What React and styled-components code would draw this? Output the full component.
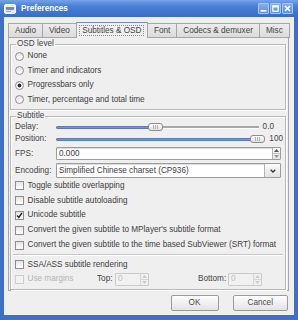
import React from 'react'
import styled, { createGlobalStyle } from 'styled-components'

const GlobalStyle = createGlobalStyle`
  html, body {
    margin: 0;
    padding: 0;
    background: #fff;
  }
  body {
    font-family: "Liberation Sans", Arial, sans-serif;
    font-size: 8.2px;
    line-height: 10px;
    color: #3c3c3c;
  }
`

const Window = styled.div`
  width: 298px;
  height: 320px;
  display: flex;
  flex-direction: column;
  background: #3d70c6;
`

const TitleBar = styled.div`
  height: 17px;
  flex: none;
  display: flex;
  align-items: center;
  padding: 0 5px 0 4px;
  background: linear-gradient(#76a3ea, #4a80d8 35%, #3a6dc6);
`

const TitleText = styled.span`
  flex: 1;
  margin-left: 5px;
  font-weight: bold;
  color: #fff;
`

const TitleButtons = styled.div`
  display: flex;
  gap: 1px;
`

const TitleButton = styled.div`
  width: 11px;
  height: 11px;
  box-sizing: border-box;
  border: 1px solid #a9c4ee;
  border-radius: 1px;
  background: linear-gradient(#86aee9, #5f8fdb);
  display: flex;
  align-items: center;
  justify-content: center;
`

const Frame = styled.div`
  flex: 1;
  display: flex;
  padding: 0 4px 5px 4px;
`

const Client = styled.div`
  flex: 1;
  display: flex;
  flex-direction: column;
  background: #efefef;
  padding: 5px 5px 3px 4px;
`

const TabBar = styled.div`
  display: flex;
  align-items: flex-end;
  height: 16px;
`

const Tab = styled.div`
  position: ${p => (p.active ? 'relative' : 'static')};
  z-index: ${p => (p.active ? 1 : 'auto')};
  flex: none;
  white-space: nowrap;
  height: ${p => (p.active ? 16 : 15)}px;
  box-sizing: border-box;
  padding: 0 ${p => (p.active ? 2.5 : 6)}px;
  margin-right: -1px;
  border: 1px solid #a6a6a6;
  border-top-color: ${p => (p.active ? '#7d8ca6' : '#a6a6a6')};
  border-bottom: none;
  border-radius: 1px 1px 0 0;
  background: ${p => (p.active ? '#efefef' : 'linear-gradient(#ececec, #dadada)')};
  display: flex;
  align-items: center;
  justify-content: center;
  color: #444;
`

const FocusLabel = styled.span`
  border: 1px dotted #8a8a8a;
  padding: 0 2px;
  line-height: 9px;
`

const Panel = styled.div`
  margin-top: -1px;
  height: 254px;
  box-sizing: border-box;
  border: 1px solid #a6a6a6;
  background: #efefef;
  padding: 1px 2px 0 1px;
  display: flex;
  flex-direction: column;
`

const Group = styled.fieldset`
  margin: ${p => p.gap || 0}px 0 0 0;
  padding: 0 2px ${p => p.bottom || 2}px 4px;
  border: 1px solid #b9b9b9;
  box-shadow: inset 1px 1px 0 #fff, 1px 1px 0 #fff;
  min-width: 0;
`

const Legend = styled.legend`
  padding: 0 1px;
  margin-left: 1px;
  line-height: 10px;
  color: #444;
`

const OptionRow = styled.label`
  height: ${p => p.h || 14.5}px;
  display: flex;
  align-items: center;
  gap: 3.5px;
  color: ${p => (p.disabled ? '#b4b4b4' : '#404040')};
  white-space: nowrap;
`

const RadioDot = styled.span`
  width: 9px;
  height: 9px;
  box-sizing: border-box;
  border: 1px solid #8e8e8e;
  border-radius: 50%;
  background: ${p =>
    p.checked
      ? 'radial-gradient(circle, #2a2a2a 0 1.7px, transparent 2.2px), linear-gradient(#e2e2e2, #fff)'
      : 'linear-gradient(#e2e2e2, #fff)'};
  flex: none;
`

const CheckBox = styled.span`
  width: 9px;
  height: 9px;
  box-sizing: border-box;
  border: 1px solid ${p => (p.disabled ? '#cdcdcd' : '#8e8e8e')};
  background: ${p => (p.disabled ? '#f2f2f2' : 'linear-gradient(#e4e4e4, #fff)')};
  display: flex;
  align-items: center;
  justify-content: center;
  flex: none;
`

const FieldRow = styled.div`
  height: ${p => p.h}px;
  margin-top: ${p => p.top || 0}px;
  display: flex;
  align-items: center;
`

const FieldLabel = styled.span`
  width: 41px;
  flex: none;
  color: #444;
`

const Slider = styled.div`
  flex: 1;
  height: 9px;
  display: flex;
  align-items: center;
`

const GrooveFill = styled.div`
  height: 3px;
  border-radius: 1px;
  background: linear-gradient(#8eaad4, #5f84bd);
  border: 1px solid #5a7bb0;
  box-sizing: border-box;
`

const GrooveRest = styled.div`
  flex: 1;
  height: 2px;
  background: #a8a8a8;
  border-bottom: 1px solid #fff;
`

const Handle = styled.div`
  width: 15px;
  height: 8px;
  box-sizing: border-box;
  margin: 0 -1px;
  border: 1px solid #8c8c8c;
  border-radius: 3px;
  background: linear-gradient(#fff, #e0e0e0);
  display: flex;
  align-items: center;
  justify-content: center;
  gap: 1px;
  position: relative;
  z-index: 1;

  span {
    width: 1px;
    height: 4px;
    background: #b0b0b0;
  }
`

const SliderValue = styled.span`
  margin-left: 4px;
  padding-right: ${p => p.pad || 0}px;
  color: #444;
`

const Input = styled.div`
  flex: 1;
  height: ${p => p.h}px;
  box-sizing: border-box;
  border: 1px solid ${p => (p.disabled ? '#cbcbcb' : '#9c9c9c')};
  border-radius: 1px;
  background: ${p => (p.disabled ? '#f1f1f1' : '#fff')};
  box-shadow: ${p => (p.disabled ? 'none' : 'inset 0 1px 0 #dcdcdc')};
  display: flex;
  align-items: stretch;
  color: ${p => (p.disabled ? '#c0c0c0' : '#3c3c3c')};
`

const InputText = styled.span`
  flex: 1;
  padding-left: 2px;
  display: flex;
  align-items: center;
  white-space: nowrap;
`

const SpinButtons = styled.div`
  width: 7px;
  display: flex;
  flex-direction: column;
  border-left: 1px solid ${p => (p.disabled ? '#d6d6d6' : '#b4b4b4')};
  background: ${p => (p.disabled ? '#f1f1f1' : 'linear-gradient(#fafafa, #e4e4e4)')};

  span {
    flex: 1;
    display: flex;
    align-items: center;
    justify-content: center;
  }
  span + span {
    border-top: 1px solid ${p => (p.disabled ? '#d6d6d6' : '#c4c4c4')};
  }
`

const ComboButton = styled.div`
  width: 15px;
  border-left: 1px solid #b4b4b4;
  background: linear-gradient(#fbfbfb, #e2e2e2);
  display: flex;
  align-items: center;
  justify-content: center;
`

const Separator = styled.div`
  margin: 1.5px 0 2px -2px;
  height: 1px;
  background: #c4c4c4;
  border-bottom: 1px solid #fff;
`

const MarginRow = styled.div`
  height: 15px;
  display: grid;
  grid-template-columns: 82px 18px 34px 49px 30px 34px;
  align-items: center;
`

const SmallLabel = styled.span`
  color: #444;
`

const ButtonRow = styled.div`
  display: flex;
  justify-content: flex-end;
  gap: 14px;
  margin-top: 4px;
  padding-right: 1px;
`

const Button = styled.button`
  height: 16px;
  min-width: 48px;
  padding: 0 14px;
  font: inherit;
  color: #4a4a4a;
  border: 1px solid #9a9a9a;
  border-radius: 2px;
  background: linear-gradient(#fdfdfd, #e3e3e3);
  box-shadow: inset 0 1px 0 #fff;
`

function Arrow({ up, color = '#666' }) {
  return (
    <svg width="5" height="3" viewBox="0 0 5 3">
      <path d={up ? 'M0 3 L2.5 0 L5 3 Z' : 'M0 0 L2.5 3 L5 0 Z'} fill={color} />
    </svg>
  )
}

function Spin({ disabled }) {
  return (
    <SpinButtons disabled={disabled}>
      <span><Arrow up color={disabled ? '#ccc' : '#555'} /></span>
      <span><Arrow color={disabled ? '#ccc' : '#999'} /></span>
    </SpinButtons>
  )
}

function SliderBar({ pos }) {
  return (
    <Slider>
      <GrooveFill style={{ width: pos }} />
      <Handle><span /><span /><span /></Handle>
      <GrooveRest />
    </Slider>
  )
}

function Radio({ checked, children }) {
  return (
    <OptionRow>
      <RadioDot checked={checked} />
      {children}
    </OptionRow>
  )
}

function Check({ checked, disabled, children, h }) {
  return (
    <OptionRow disabled={disabled} h={h}>
      <CheckBox disabled={disabled}>
        {checked && (
          <svg width="7" height="7" viewBox="0 0 7 7">
            <path d="M1 3.5 L2.8 5.5 L6 1" stroke="#222" strokeWidth="1.4" fill="none" />
          </svg>
        )}
      </CheckBox>
      {children}
    </OptionRow>
  )
}

const tabs = ['Audio', 'Video', 'Subtitles & OSD', 'Font', 'Codecs & demuxer', 'Misc']

const checks = [
  { label: 'Toggle subtitle overlapping' },
  { label: 'Disable subtitle autoloading' },
  { label: 'Unicode subtitle', checked: true },
  { label: "Convert the given subtitle to MPlayer's subtitle format" },
  { label: 'Convert the given subtitle to the time based SubViewer (SRT) format' }
]

export default function App() {
  return (
    <>
      <GlobalStyle />
      <Window>
        <TitleBar>
          <svg width="12" height="10" viewBox="0 0 12 10">
            <rect x="0.5" y="0.5" width="11" height="9" rx="1.5" fill="#e8edf5" stroke="#fff" />
            <rect x="2" y="3" width="8" height="3" fill="#6b8fc8" />
            <rect x="2" y="7" width="5" height="1" fill="#9aa" />
          </svg>
          <TitleText>Preferences</TitleText>
          <TitleButtons>
            <TitleButton>
              <svg width="7" height="7" viewBox="0 0 7 7">
                <rect x="0.5" y="5" width="6" height="1.6" fill="#fff" />
              </svg>
            </TitleButton>
            <TitleButton>
              <svg width="7" height="7" viewBox="0 0 7 7">
                <rect x="0.8" y="0.8" width="5.4" height="5.4" fill="none" stroke="#fff" strokeWidth="1.2" />
                <rect x="0.8" y="0.8" width="5.4" height="1.6" fill="#fff" />
              </svg>
            </TitleButton>
            <TitleButton>
              <svg width="7" height="7" viewBox="0 0 7 7">
                <path d="M1 1 L6 6 M6 1 L1 6" stroke="#fff" strokeWidth="1.6" />
              </svg>
            </TitleButton>
          </TitleButtons>
        </TitleBar>
        <Frame>
          <Client>
            <TabBar>
              {tabs.map(t => (
                <Tab key={t} active={t === 'Subtitles & OSD'}>
                  {t === 'Subtitles & OSD' ? <FocusLabel>{t}</FocusLabel> : t}
                </Tab>
              ))}
            </TabBar>
            <Panel>
              <Group bottom={2}>
                <Legend>OSD level</Legend>
                <Radio>None</Radio>
                <Radio>Timer and indicators</Radio>
                <Radio checked>Progressbars only</Radio>
                <Radio>Timer, percentage and total time</Radio>
              </Group>
              <Group gap={1} bottom={2}>
                <Legend>Subtitle</Legend>
                <FieldRow h={12}>
                  <FieldLabel>Delay:</FieldLabel>
                  <SliderBar pos="46%" />
                  <SliderValue pad={9}>0.0</SliderValue>
                </FieldRow>
                <FieldRow h={12}>
                  <FieldLabel>Position:</FieldLabel>
                  <SliderBar pos="93%" />
                  <SliderValue>100</SliderValue>
                </FieldRow>
                <FieldRow h={13} top={2}>
                  <FieldLabel>FPS:</FieldLabel>
                  <Input h={13}>
                    <InputText>0.000</InputText>
                    <Spin />
                  </Input>
                  <span style={{ width: 2 }} />
                </FieldRow>
                <FieldRow h={15} top={3}>
                  <FieldLabel>Encoding:</FieldLabel>
                  <Input h={15}>
                    <InputText>Simplified Chinese charset (CP936)</InputText>
                    <ComboButton>
                      <svg width="6" height="4" viewBox="0 0 6 4">
                        <path d="M0.7 0.7 L3 3 L5.3 0.7" stroke="#333" strokeWidth="1.3" fill="none" />
                      </svg>
                    </ComboButton>
                  </Input>
                  <span style={{ width: 2 }} />
                </FieldRow>
                <div style={{ height: 0.5 }} />
                {checks.map(c => (
                  <Check key={c.label} checked={c.checked} h={14.8}>
                    {c.label}
                  </Check>
                ))}
                <Separator />
                <Check h={14}>SSA/ASS subtitle rendering</Check>
                <MarginRow>
                  <Check disabled h={15}>Use margins</Check>
                  <SmallLabel>Top:</SmallLabel>
                  <Input h={13} disabled>
                    <InputText>0</InputText>
                    <Spin disabled />
                  </Input>
                  <span />
                  <SmallLabel>Bottom:</SmallLabel>
                  <Input h={13} disabled>
                    <InputText>0</InputText>
                    <Spin disabled />
                  </Input>
                </MarginRow>
              </Group>
            </Panel>
            <ButtonRow>
              <Button>OK</Button>
              <Button>Cancel</Button>
            </ButtonRow>
          </Client>
        </Frame>
      </Window>
    </>
  )
}
